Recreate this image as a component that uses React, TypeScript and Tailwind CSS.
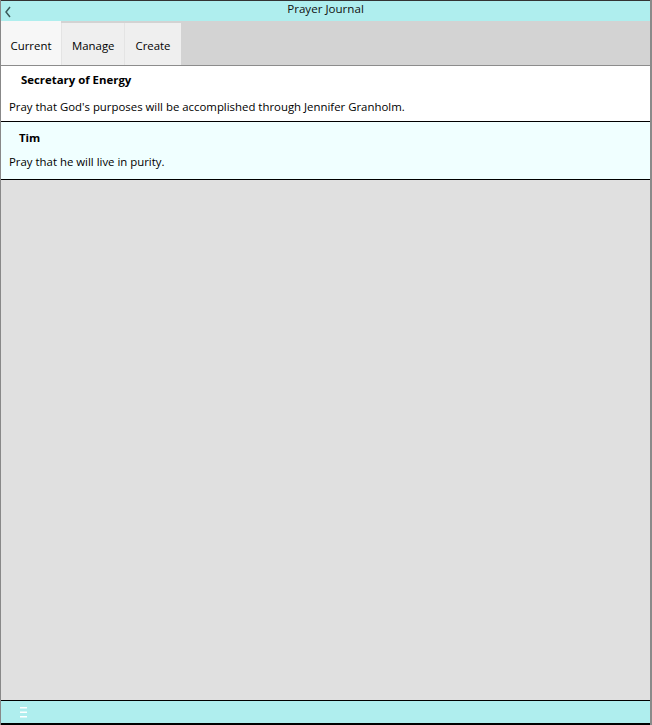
import React from "react";

const font = { fontFamily: '"Open Sans", "Noto Sans", "Liberation Sans", sans-serif' };

type Prayer = { title: string; body: string; tint: string; head: string; gap: string };

const prayers: Prayer[] = [
  {
    title: "Secretary of Energy",
    body: "Pray that God's purposes will be accomplished through Jennifer Granholm.",
    tint: "bg-white",
    head: "pl-[20px] pt-[5px]",
    gap: "pt-[10px] pb-[6px]",
  },
  {
    title: "Tim",
    body: "Pray that he will live in purity.",
    tint: "bg-[#f0ffff]",
    head: "pl-[18px] pt-[7px]",
    gap: "pt-[7px] pb-[9px]",
  },
];

function Tab({ label, active }: { label: string; active?: boolean }) {
  return (
    <div
      className={
        active
          ? "flex h-[44px] w-[60px] items-center justify-center bg-[#f7f7f7] text-[11.4px] text-black"
          : "mt-[2px] flex h-[42px] items-center justify-center border-l border-[#e4e4e4] bg-[#efefef] px-[10px] text-[11.4px] text-black"
      }
    >
      <span className={active ? "pt-[6px]" : "pt-[4px]"}>{label}</span>
    </div>
  );
}

export default function App() {
  return (
    <div
      className="flex h-[725px] w-[652px] flex-col border-l border-r-2 border-l-[#888] border-r-[#8a8a8a] bg-[#e0e0e0]"
      style={font}
    >
      <div className="relative flex h-[21px] justify-center border-t border-[#333] bg-[#afeeee]">
        <svg className="absolute left-[3px] top-[5px]" width="8" height="12" viewBox="0 0 8 12">
          <path d="M6 1 L2 6 L6 11" fill="none" stroke="#3a5a5a" strokeWidth="1.5" />
        </svg>
        <span className="text-[11.6px] leading-[15px] text-[#111]">Prayer Journal</span>
      </div>

      <div className="flex h-[45px] border-b border-[#8c8c8c] bg-[#d3d3d3]">
        <Tab label="Current" active />
        <Tab label="Manage" />
        <Tab label="Create" />
      </div>

      {prayers.map((p) => (
        <div key={p.title} className={`border-b border-black ${p.tint}`}>
          <div className={`${p.head} text-[11.4px] font-bold text-black`}>{p.title}</div>
          <div className={`pl-[8px] ${p.gap} text-[11.4px] text-black`}>{p.body}</div>
        </div>
      ))}

      <div className="flex-1" />

      <div className="flex h-[25px] items-center border-t border-b-2 border-black bg-[#afeeee] pl-[19px]">
        <svg width="7" height="12" viewBox="0 0 7 12">
          <rect x="0" y="1" width="7" height="1.5" fill="#fff" />
          <rect x="0" y="5.5" width="7" height="1.5" fill="#fff" />
          <rect x="0" y="10" width="7" height="1.5" fill="#fff" />
        </svg>
      </div>
    </div>
  );
}
